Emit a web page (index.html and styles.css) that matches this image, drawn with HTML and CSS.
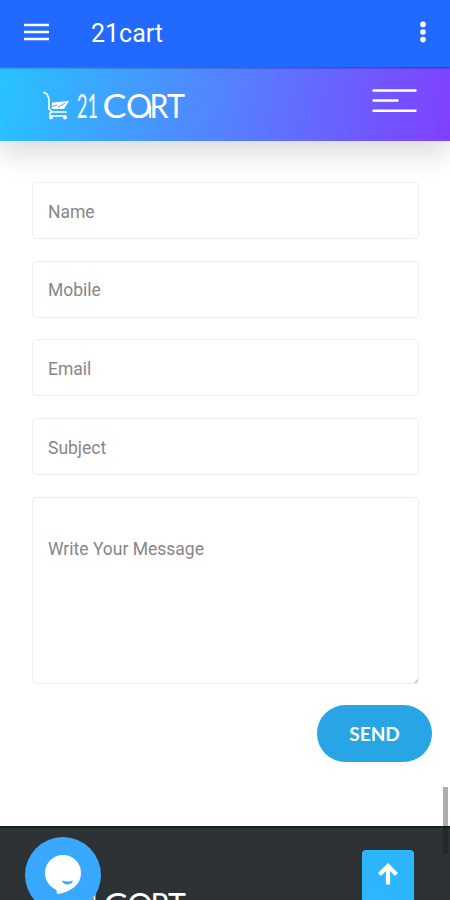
FILE: index.html
```html
<!DOCTYPE html>
<html lang="en">
<head>
    <meta charset="UTF-8">
    <meta name="viewport" content="width=device-width, initial-scale=1.0">
    <title>21cart</title>
    <link rel="stylesheet" href="styles.css">
</head>
<body>
    <header class="app-bar">
        <svg class="menu-icon" width="25" height="18" viewBox="0 0 25 18">
            <path d="M0 2h25M0 9h25M0 16h25" stroke="#fff" stroke-width="2.4"/>
        </svg>
        <h1 class="app-title">21cart</h1>
        <svg class="more-icon" width="6" height="22" viewBox="0 0 6 22" fill="#fff">
            <circle cx="3" cy="3.4" r="2.8"/>
            <circle cx="3" cy="11" r="2.8"/>
            <circle cx="3" cy="18.6" r="2.8"/>
        </svg>
    </header>

    <nav class="navbar">
        <svg class="logo" width="150" height="36" viewBox="0 0 150 36" aria-label="21 CART">
            <g fill="none" stroke="#fff" stroke-width="1.7" stroke-linecap="round" stroke-linejoin="round">
                <path d="M4 4.500l3 1.500 2 5v10l3 3h14"/>
                <path d="M12 24c-3 1-3 3-1 4h15"/>
            </g>
            <path d="M12 14.500l17-1.500-5 8H11.500z" fill="#fff"/>
            <path d="M11 18.500l6-1.500M18 19l7-4" stroke="#38b0ff" stroke-width="1"/>
            <circle cx="11" cy="29.500" r="1.900" fill="#fff"/>
            <circle cx="25" cy="29.500" r="1.900" fill="#fff"/>
            <text class="logo-text" y="30" x="37" textLength="21" lengthAdjust="spacingAndGlyphs">21</text>
            <text class="logo-text" y="30" x="62.500" textLength="24" lengthAdjust="spacingAndGlyphs">C</text>
            <text class="logo-text" y="30" x="86" textLength="26" lengthAdjust="spacingAndGlyphs">O</text>
            <path d="M110.200 18v12" stroke="#fff" stroke-width="2"/>
            <text class="logo-text" y="30" x="109.500" textLength="19" lengthAdjust="spacingAndGlyphs">R</text>
            <text class="logo-text" y="30" x="127" textLength="18" lengthAdjust="spacingAndGlyphs">T</text>
        </svg>
        <svg class="nav-toggle" width="45" height="26" viewBox="0 0 45 26">
            <path d="M1.500 2.500h42M1.500 12.500h24M1.500 22.700h42" stroke="#fff" stroke-width="2.500" stroke-linecap="round"/>
        </svg>
    </nav>

    <form class="contact-form">
        <input type="text" class="field" placeholder="Name">
        <input type="text" class="field" placeholder="Mobile">
        <input type="text" class="field" placeholder="Email">
        <input type="text" class="field" placeholder="Subject">
        <textarea class="field message" placeholder="Write Your Message"></textarea>
        <button type="button" class="send-btn">SEND</button>
    </form>

    <footer class="footer">
        <svg class="footer-logo" width="150" height="36" viewBox="0 0 150 36" aria-label="21 CART">
            <text class="logo-text" y="30" x="37" textLength="21" lengthAdjust="spacingAndGlyphs">21</text>
            <text class="logo-text" y="30" x="62.500" textLength="24" lengthAdjust="spacingAndGlyphs">C</text>
            <text class="logo-text" y="30" x="86" textLength="26" lengthAdjust="spacingAndGlyphs">O</text>
            <text class="logo-text" y="30" x="109.500" textLength="19" lengthAdjust="spacingAndGlyphs">R</text>
            <text class="logo-text" y="30" x="127" textLength="18" lengthAdjust="spacingAndGlyphs">T</text>
        </svg>
    </footer>

    <div class="chat-btn">
        <svg width="76" height="76" viewBox="0 0 76 76">
            <circle cx="38" cy="36" r="18" fill="#fff"/>
            <path d="M31 50l1 7q10-1 17-7l-8-5z" fill="#fff"/>
            <path d="M37 43.500q6 2 11 0-1 4-5.500 4t-5.500-4z" fill="#39a9ff"/>
        </svg>
    </div>
    <a class="to-top" href="#">
        <svg width="22" height="24" viewBox="0 0 22 24">
            <path d="M11 22.500V5M2.500 12.500L11 4l8.500 8.500" fill="none" stroke="#fff" stroke-width="4.200"/>
        </svg>
    </a>
    <div class="scroll-thumb"></div>
</body>
</html>
```

FILE: styles.css
```css
* {
    box-sizing: border-box;
}
body {
    margin: 0;
    height: 900px;
    display: flex;
    flex-direction: column;
    position: relative;
    overflow: hidden;
    background-color: #fff;
    font-family: Roboto, sans-serif;
}
.app-bar {
    height: 67px;
    flex-shrink: 0;
    display: flex;
    align-items: center;
    padding: 0 24px 3px;
    background-color: #2169ff;
    box-shadow: 0 1px 2px rgba(0,0,0,0.4);
    z-index: 2;
}
.app-title {
    margin: 3px auto 0 42px;
    color: #fff;
    font-size: 25px;
    font-weight: 400;
    line-height: 30px;
}
.navbar {
    height: 74px;
    flex-shrink: 0;
    display: flex;
    justify-content: space-between;
    align-items: flex-start;
    padding: 21px 33px 0 40px;
    background: linear-gradient(100deg, #28c3ff 0%, #8040ff 100%);
    box-shadow: 0 12px 28px rgba(0,0,0,0.15);
    z-index: 1;
}
.logo-text {
    font-family: Lato, sans-serif;
    font-size: 32px;
    font-weight: 400;
    fill: #fff;
}
.contact-form {
    display: flex;
    flex-direction: column;
    gap: 21.7px;
    padding: 41px 31px 0 32px;
}
.field {
    display: block;
    width: 100%;
    height: 57px;
    flex-shrink: 0;
    padding: 2px 15px 0;
    border: 1px solid #eeeef0;
    border-radius: 4px;
    background-color: #fff;
    font-family: Roboto, sans-serif;
    font-size: 17.5px;
    outline: none;
}
.field::placeholder {
    color: #86868a;
    opacity: 1;
}
.message {
    height: 187px;
    padding-top: 41px;
}
.message::-webkit-resizer {
    background: linear-gradient(135deg, transparent 85%, #d4d4d4 85%);
}
.send-btn {
    align-self: flex-end;
    width: 115px;
    height: 57px;
    margin-right: -13px;
    padding: 0 6px;
    border: none;
    border-radius: 29px;
    background-color: #28a5e4;
    color: #fff;
    font-family: Lato, sans-serif;
    font-size: 19px;
    font-weight: 700;
}
.footer {
    height: 74px;
    flex-shrink: 0;
    margin-top: auto;
    padding: 59px 0 0 41px;
    overflow: hidden;
    border-top: 2px solid #152224;
    background-color: #2d3335;
}
.chat-btn {
    position: absolute;
    left: 25px;
    top: 837px;
    width: 76px;
    height: 76px;
    border-radius: 50%;
    background-color: #39a9ff;
}
.to-top {
    position: absolute;
    left: 362px;
    top: 850px;
    width: 52px;
    height: 54px;
    display: flex;
    justify-content: center;
    padding-top: 12px;
    border-radius: 4px;
    background-color: #2db6ff;
}
.scroll-thumb {
    position: absolute;
    right: 2px;
    top: 787px;
    width: 5px;
    height: 67px;
    background-color: rgba(20,20,20,0.35);
}
```
